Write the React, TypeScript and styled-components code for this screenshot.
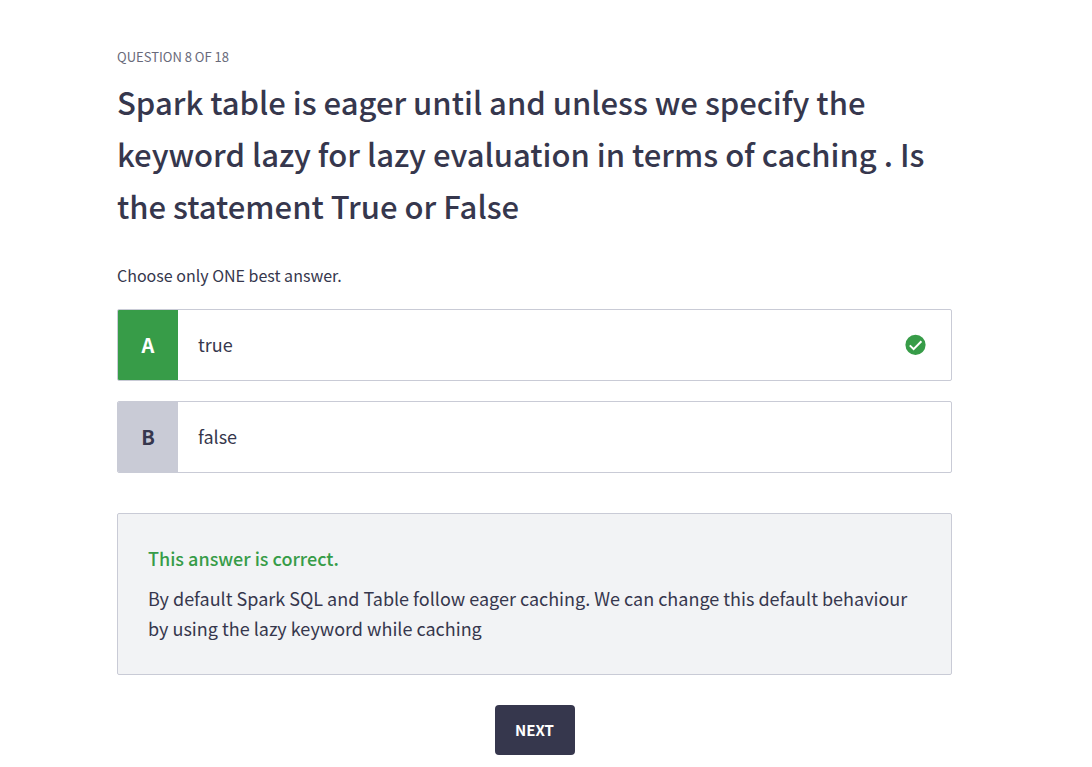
import React from "react";
import styled, { createGlobalStyle } from "styled-components";

const GlobalStyle = createGlobalStyle`
  *, *::before, *::after { box-sizing: border-box; }
  body {
    margin: 0;
    background: #fff;
    color: #36374d;
    font-family: "Source Sans Pro", "Noto Sans CJK SC", sans-serif;
    font-size: 18px;
    line-height: 30px;
  }
`;

const Page = styled.main`
  max-width: 1068px;
  padding: 42px 116px 12px 117px;
`;

const Progress = styled.p`
  margin: 0;
  font-size: 13px;
  line-height: 30px;
  color: #696a7a;
  text-transform: uppercase;
`;

const Title = styled.h1`
  margin: 4px 0 0;
  font-size: 31px;
  line-height: 52px;
  font-weight: 500;
`;

const Choices = styled.fieldset`
  margin: 28px 0 0;
  padding: 0;
  border: 0;
  min-width: 0;
`;

const Hint = styled.legend`
  padding: 0;
  margin-bottom: 19px;
  font-size: 16px;
`;

const Choice = styled.label`
  display: flex;
  height: 72px;
  border: 1px solid #c9cbd6;
  border-radius: 2px;
  overflow: hidden;
  cursor: pointer;
  & + & { margin-top: 20px; }
`;

const Radio = styled.input`
  position: absolute;
  opacity: 0;
`;

const Letter = styled.span<{ $correct?: boolean }>`
  display: flex;
  align-items: center;
  justify-content: center;
  width: 60px;
  font-size: 20px;
  font-weight: 700;
  color: ${(p) => (p.$correct ? "#fff" : "#36374d")};
  background: ${(p) => (p.$correct ? "#379c48" : "#c9cbd6")};
`;

const ChoiceBody = styled.span`
  display: flex;
  flex: 1;
  align-items: center;
  justify-content: space-between;
  padding: 0 25px 2px 20px;
`;

const Feedback = styled.section`
  margin-top: 40px;
  padding: 29px 30px 31px;
  border: 1px solid #c9cbd6;
  border-radius: 2px;
  background: #f2f3f5;
`;

const FeedbackTitle = styled.h2`
  margin: 0 0 10px;
  font-size: 18px;
  line-height: 30px;
  font-weight: 500;
  color: #379c48;
`;

const FeedbackText = styled.p`
  margin: 0;
`;

const Actions = styled.div`
  display: flex;
  justify-content: center;
  margin-top: 30px;
`;

const NextButton = styled.button`
  min-width: 80px;
  height: 50px;
  padding: 0 20px;
  border: 0;
  border-radius: 4px;
  background: #36374d;
  color: #fff;
  font: inherit;
  font-size: 15px;
  font-weight: 700;
  text-transform: uppercase;
  cursor: pointer;
`;

const CheckIcon = () => (
  <svg width="21" height="21" viewBox="0 0 21 21" aria-hidden="true">
    <circle cx="10.5" cy="10.8" r="10.1" fill="#379c48" />
    <path
      d="M4.8 11.4 8.6 15.2 16.4 7.2"
      fill="none"
      stroke="#fff"
      strokeWidth="2"
    />
  </svg>
);

const choices = [
  { letter: "A", text: "true", correct: true },
  { letter: "B", text: "false", correct: false },
];

export default function App() {
  return (
    <>
      <GlobalStyle />
      <Page>
        <Progress>Question 8 of 18</Progress>
        <Title>
          Spark table is eager until and unless we specify the keyword lazy for lazy evaluation in
          terms of caching . Is the statement True or False
        </Title>
        <Choices>
          <Hint>Choose only ONE best answer.</Hint>
          {choices.map((c) => (
            <Choice key={c.letter}>
              <Radio type="radio" name="answer" value={c.letter} defaultChecked={c.correct} />
              <Letter $correct={c.correct}>{c.letter}</Letter>
              <ChoiceBody>
                {c.text}
                {c.correct && <CheckIcon />}
              </ChoiceBody>
            </Choice>
          ))}
        </Choices>
        <Feedback>
          <FeedbackTitle>This answer is correct.</FeedbackTitle>
          <FeedbackText>
            By default Spark SQL and Table follow eager caching. We can change this default
            behaviour by using the lazy keyword while caching
          </FeedbackText>
        </Feedback>
        <Actions>
          <NextButton type="button">Next</NextButton>
        </Actions>
      </Page>
    </>
  );
}
